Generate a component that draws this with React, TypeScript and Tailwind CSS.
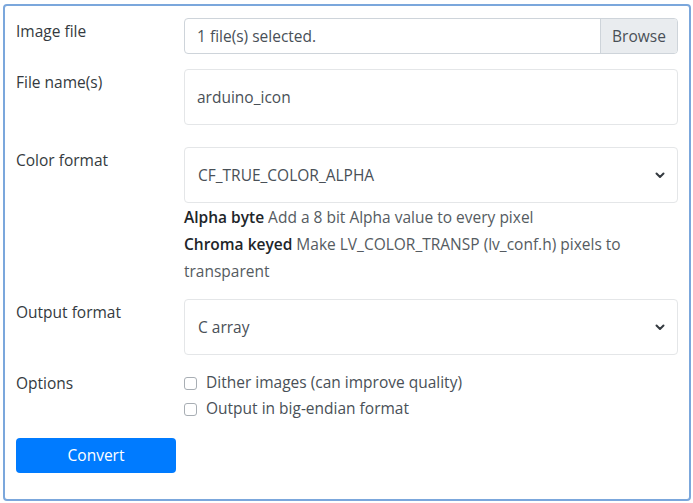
import { useState } from 'react';

function Chevron() {
  return (
    <svg width="10" height="8" viewBox="0 0 10 8" className="shrink-0">
      <path d="M1.5 2.5 L5 6 L8.5 2.5" fill="none" stroke="#343a40" strokeWidth="2" strokeLinecap="round" strokeLinejoin="round" />
    </svg>
  );
}

function Select({ value }: { value: string }) {
  return (
    <div className="h-[56px] border border-[#e4e6e8] rounded-[4px] flex items-center justify-between pl-[13px] pr-[12px] text-[#495057]">
      <span className="pt-[2px]">{value}</span>
      <Chevron />
    </div>
  );
}

export default function App() {
  const [dither, setDither] = useState(false);
  const [bigEndian, setBigEndian] = useState(false);

  return (
    <div
      className="w-[693px] h-[503px] bg-white pt-[4px] pl-[3px] pr-[2px] pb-[2px] text-[15.5px] text-[#343a40]"
      style={{ fontFamily: '"Open Sans", "Noto Sans", sans-serif' }}
    >
      <div className="h-full border-2 border-[#7ba7dc] rounded-[4px] px-[11px] pt-[12px]">
        <div className="grid grid-cols-[168px_1fr]">
          {/* Image file */}
          <div className="leading-6 pt-px">Image file</div>
          <div className="h-[36px] border border-[#ced4da] rounded-[4px] flex overflow-hidden text-[#495057]">
            <div className="flex-1 flex items-center pl-[12px] pt-[2px]">1 file(s) selected.</div>
            <div className="w-[77px] flex items-center justify-center pt-[2px] bg-[#e9ecef] border-l border-[#ced4da]">Browse</div>
          </div>

          {/* File name */}
          <div className="leading-6 pt-px mt-[15px]">File name(s)</div>
          <div className="mt-[15px] h-[56px] border border-[#e4e6e8] rounded-[4px] flex items-center pl-[12px] pt-[2px] text-[#495057]">
            arduino_icon
          </div>

          {/* Color format */}
          <div className="leading-6 pt-px mt-[22px]">Color format</div>
          <div className="mt-[22px]">
            <Select value="CF_TRUE_COLOR_ALPHA" />
            <div className="leading-[27px] pt-px text-[#555b61]">
              <div>
                <span className="font-semibold text-[#212529]">Alpha byte</span> Add a 8 bit Alpha value to every pixel
              </div>
              <div>
                <span className="font-semibold text-[#212529]">Chroma keyed</span> Make LV_COLOR_TRANSP (lv_conf.h) pixels to transparent
              </div>
            </div>
          </div>

          {/* Output format */}
          <div className="leading-6 pt-px mt-[14px]">Output format</div>
          <div className="mt-[14px]">
            <Select value="C array" />
          </div>

          {/* Options */}
          <div className="leading-6 pt-px mt-[15px]">Options</div>
          <div className="mt-[15px] text-[#495057]">
            <label className="flex items-center h-[26px] cursor-pointer">
              <input
                type="checkbox"
                checked={dither}
                onChange={() => setDither(!dither)}
                className="appearance-none w-[13px] h-[13px] border border-[#a8aeb4] rounded-[3px] mr-[9px] bg-white"
              />
              Dither images (can improve quality)
            </label>
            <label className="flex items-center h-[26px] cursor-pointer">
              <input
                type="checkbox"
                checked={bigEndian}
                onChange={() => setBigEndian(!bigEndian)}
                className="appearance-none w-[13px] h-[13px] border border-[#a8aeb4] rounded-[3px] mr-[9px] bg-white"
              />
              Output in big-endian format
            </label>
          </div>
        </div>

        <button className="mt-[16px] w-[160px] h-[35px] bg-[#007bff] text-white rounded-[4px]">Convert</button>
      </div>
    </div>
  );
}
